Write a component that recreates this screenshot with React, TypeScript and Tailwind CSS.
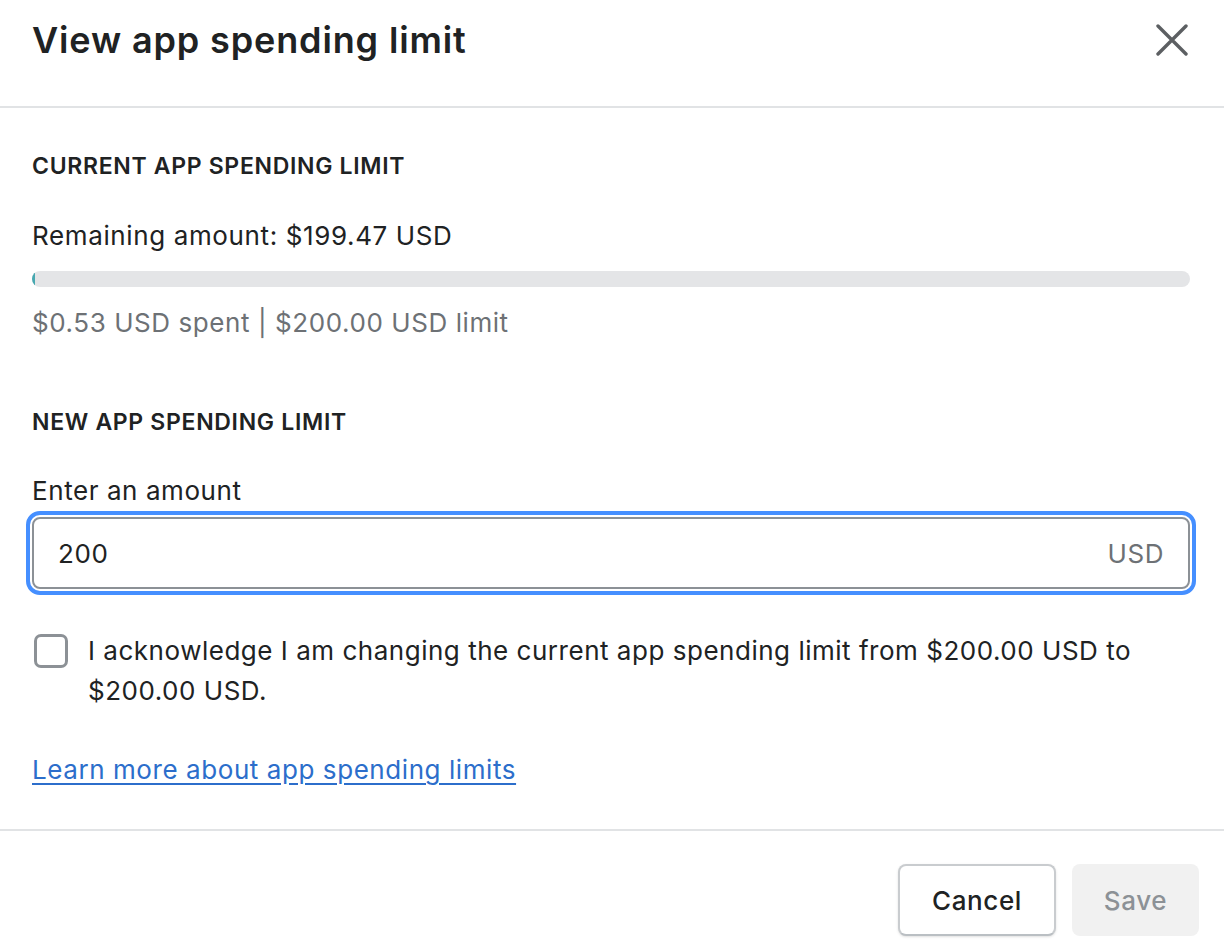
export default function App() {
  return (
    <div
      className="w-[1224px] h-[952px] overflow-hidden bg-white text-[#202223]"
      style={{ fontFamily: 'Inter, "Noto Sans", sans-serif' }}
    >
      {/* Header */}
      <div className="h-[108px] flex items-start justify-between pl-8 pr-[36px] pt-[18px] border-b-2 border-[#e1e3e5]">
        <h1 className="text-[36px] leading-[44px] font-semibold tracking-[0.024em]">View app spending limit</h1>
        <button className="mt-[6px] text-[#5c5f62]">
          <svg width="32" height="32" viewBox="0 0 32 32" fill="none" stroke="currentColor" strokeWidth="3.4" strokeLinecap="round">
            <path d="M2 2L30 30M30 2L2 30" />
          </svg>
        </button>
      </div>

      {/* Body */}
      <div className="pl-8 pr-[34px] pt-[44px] pb-[43px] border-b-2 border-[#e1e3e5]">
        <h2 className="text-[23px] leading-[28px] font-semibold uppercase tracking-[0.03em]">Current app spending limit</h2>
        <p className="mt-[40px] text-[26px] leading-[32px] tracking-[0.024em]">Remaining amount: $199.47 USD</p>
        <div className="mt-[19px] h-[16px] rounded-full bg-[#e4e5e7] overflow-hidden">
          <div className="h-full w-[0.3%] bg-[#47a8b0] rounded-full" />
        </div>
        <p className="mt-[20px] text-[26px] leading-[32px] tracking-[0.022em] text-[#6d7175]">$0.53 USD spent | $200.00 USD limit</p>

        <h2 className="mt-[69px] text-[23px] leading-[28px] font-semibold uppercase tracking-[0.03em]">New app spending limit</h2>
        <label className="block mt-[39px] text-[26px] leading-[32px] tracking-[0.022em]">Enter an amount</label>
        <div className="mt-[10px] h-[72px] flex items-center justify-between px-6 rounded-lg border-2 border-[#8c9196] outline-4 outline-offset-[2px] outline-[#458fff]">
          <span className="text-[26px] tracking-[0.022em]">200</span>
          <span className="text-[26px] tracking-[0.022em] text-[#6d7175]">USD</span>
        </div>

        <div className="mt-[42px] flex items-start gap-[20px]">
          <span className="mt-[3px] ml-[2px] w-[34px] h-[34px] shrink-0 rounded-[7px] border-[3px] border-[#8c9196] bg-white" />
          <p className="text-[26px] leading-[40px] tracking-[0.02em]">
            I acknowledge I am changing the current app spending limit from $200.00 USD to $200.00 USD.
          </p>
        </div>

        <a href="#" className="block mt-[43px] text-[26px] leading-[32px] tracking-[0.022em] text-[#2c6ecb] underline underline-offset-[4px]">
          Learn more about app spending limits
        </a>
      </div>

      {/* Footer */}
      <div className="flex justify-end gap-4 pt-[33px] pr-[25px]">
        <button className="h-[72px] w-[158px] rounded-lg border-2 border-[#c9cccf] border-b-[#babfc3] bg-white text-[26px] font-medium tracking-[0.024em] shadow-sm">
          Cancel
        </button>
        <button className="h-[72px] w-[127px] rounded-lg bg-[#f1f1f1] text-[26px] font-medium tracking-[0.024em] text-[#8c9196]">
          Save
        </button>
      </div>
    </div>
  )
}
